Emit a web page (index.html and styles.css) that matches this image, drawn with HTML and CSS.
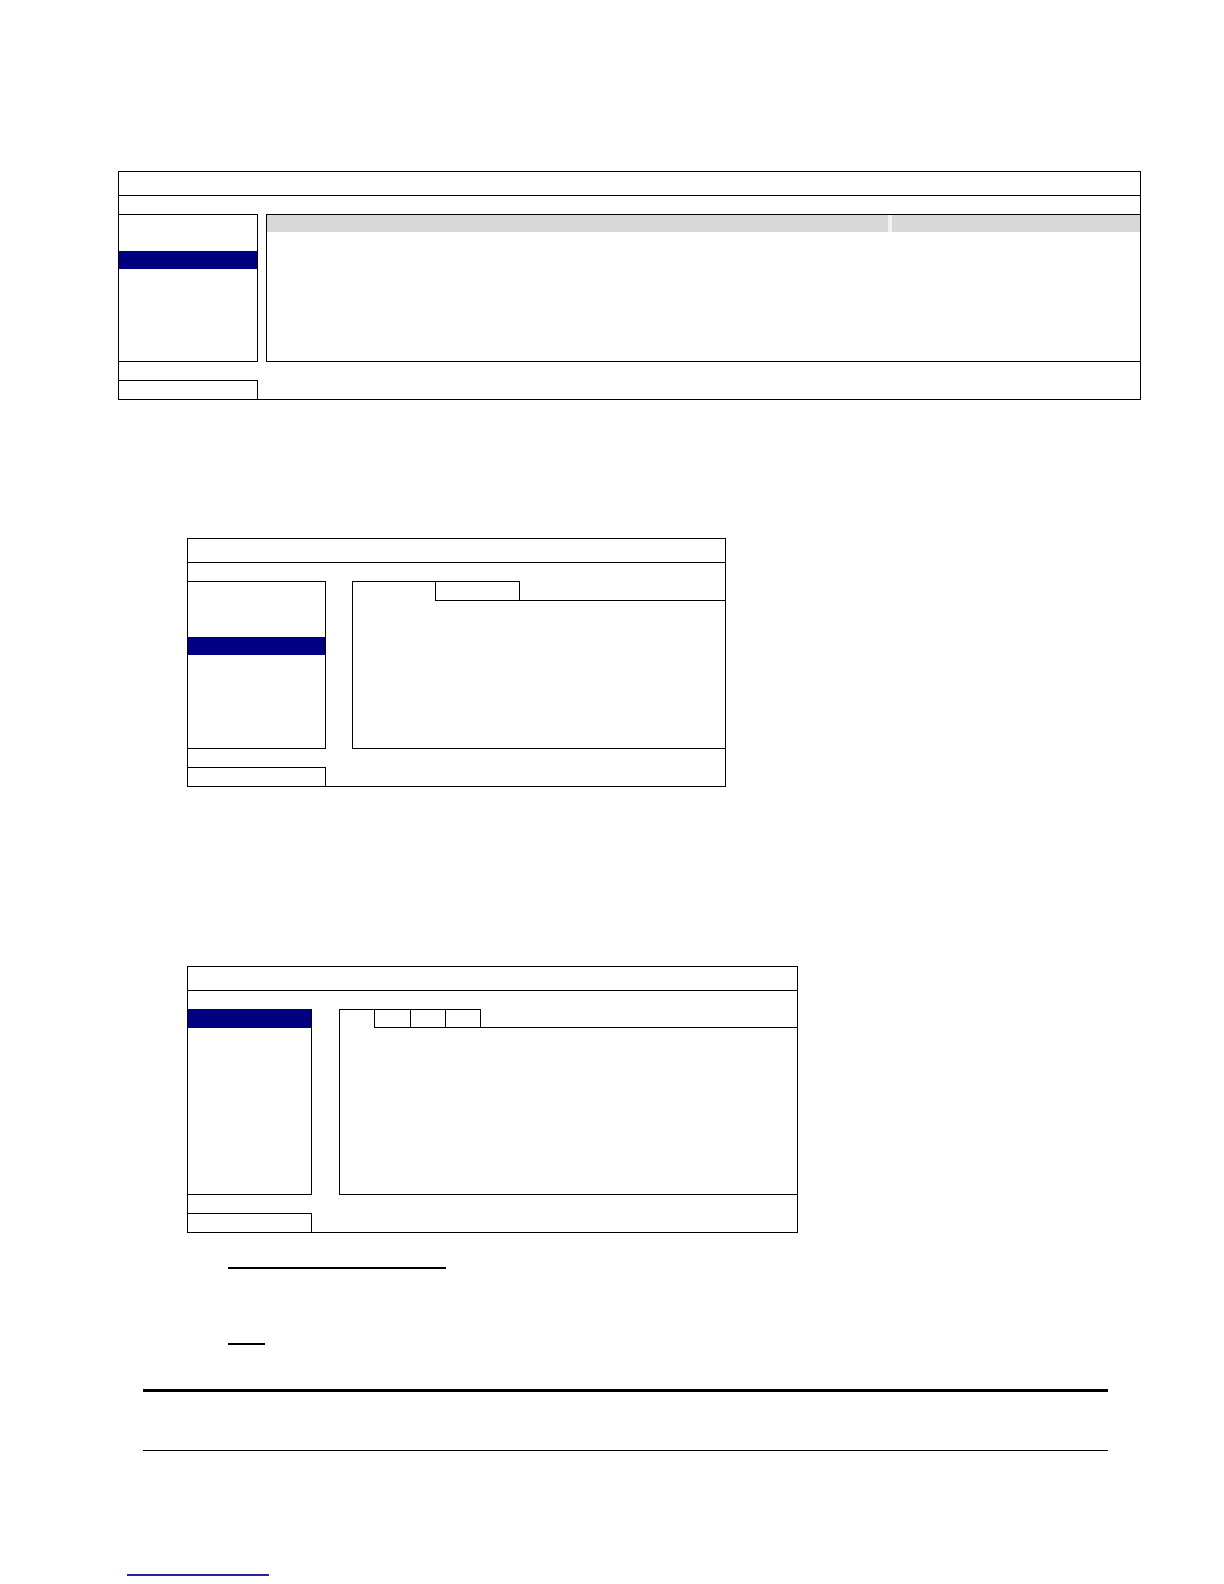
FILE: index.html
```html
<!DOCTYPE html>
<html lang="en">
<head>
<meta charset="utf-8">
<title>Menu screens</title>
<link rel="stylesheet" href="styles.css">
</head>
<body>
<main class="page">

  <section class="win win--a">
    <div class="win-title"></div>
    <div class="win-body">
      <div class="menu">
        <div class="menu-item"></div>
        <div class="menu-item"></div>
        <div class="menu-item is-active"></div>
      </div>
      <div class="content">
        <div class="grid-head">
          <div class="head-cell"></div>
          <div class="head-cell"></div>
        </div>
      </div>
    </div>
    <div class="win-foot"><div class="foot-box"></div></div>
  </section>

  <section class="win win--b">
    <div class="win-title"></div>
    <div class="win-body">
      <div class="menu">
        <div class="menu-item"></div>
        <div class="menu-item"></div>
        <div class="menu-item"></div>
        <div class="menu-item is-active"></div>
      </div>
      <div class="content">
        <div class="tabs">
          <div class="tab-lead"></div>
          <div class="tab tab--wide tab--last"></div>
          <div class="tab-fill"></div>
        </div>
      </div>
    </div>
    <div class="win-foot"><div class="foot-box"></div></div>
  </section>

  <section class="win win--c">
    <div class="win-title"></div>
    <div class="win-body">
      <div class="menu">
        <div class="menu-item is-active"></div>
      </div>
      <div class="content">
        <div class="tabs">
          <div class="tab-lead"></div>
          <div class="tab tab--s1"></div>
          <div class="tab tab--s2"></div>
          <div class="tab tab--s1 tab--last"></div>
          <div class="tab-fill"></div>
        </div>
      </div>
    </div>
    <div class="win-foot"><div class="foot-box"></div></div>
  </section>

  <div class="link-line link-line--long"></div>
  <div class="link-line link-line--short"></div>
  <div class="rule rule--thick"></div>
  <div class="rule rule--thin"></div>
  <div class="blue-line"></div>

</main>
</body>
</html>
```

FILE: styles.css
```css
html, body {
  margin: 0;
  padding: 0;
  background: #ffffff;
}

body {
  font-family: "Liberation Sans", Arial, sans-serif;
  width: 1224px;
  min-height: 1584px;
}

.page {
  padding-top: 171px;
}

/* ---------- window template ---------- */
.win {
  box-sizing: border-box;
  border: 1px solid #000;
}

.win--a {
  margin-left: 118px;
  width: 1023px;
  --menu-w: 139px;
  --panel-h: 148px;
  --gap: 8px;
}

.win--b {
  margin-left: 187px;
  margin-top: 138px;
  width: 539px;
  --menu-w: 138px;
  --panel-h: 168px;
  --gap: 26px;
  --tab-h: 20px;
  --lead-w: 82px;
}

.win--c {
  margin-left: 187px;
  margin-top: 179px;
  width: 611px;
  --menu-w: 124px;
  --panel-h: 186px;
  --gap: 27px;
  --tab-h: 19px;
  --lead-w: 34px;
}

.win-title {
  box-sizing: border-box;
  height: 24px;
  border-bottom: 1px solid #000;
}

.win-body {
  display: flex;
  padding-top: 18px;
}

.menu {
  box-sizing: border-box;
  width: var(--menu-w);
  height: var(--panel-h);
  border: 1px solid #000;
  border-left: 0;
  flex: none;
}

.win--b .menu {
  padding-top: 1px;
}

.win--c .menu {
  border-top-color: #000080;
}

.menu-item {
  height: 18px;
}

.menu-item.is-active {
  background: #000080;
}

.content {
  box-sizing: border-box;
  flex: 1;
  height: var(--panel-h);
  margin-left: var(--gap);
  border-left: 1px solid #000;
  border-bottom: 1px solid #000;
  display: flex;
  flex-direction: column;
}

.win--a .content {
  border-top: 1px solid #000;
}

/* ---------- list header (window A) ---------- */
.grid-head {
  display: grid;
  grid-template-columns: 621px 1fr;
  column-gap: 4px;
  height: 17px;
  background: #f2f2f2;
}

.head-cell {
  background: #d8d8d8;
}

/* ---------- tabs (windows B, C) ---------- */
.tabs {
  display: flex;
  height: var(--tab-h);
}

.tab-lead {
  box-sizing: border-box;
  width: var(--lead-w);
  height: var(--tab-h);
  border-top: 1px solid #000;
  flex: none;
}

.tab {
  box-sizing: border-box;
  height: var(--tab-h);
  border: 1px solid #000;
  border-right: 0;
  flex: none;
}

.tab--last {
  border-right: 1px solid #000;
}

.tab--wide { width: 85px; }
.tab--s1 { width: 36px; }
.tab--s2 { width: 35px; }

.tab-fill {
  flex: 1;
  border-bottom: 1px solid #000;
}

/* ---------- footer ---------- */
.win-foot {
  box-sizing: border-box;
  height: 37px;
  padding-top: 18px;
}

.foot-box {
  box-sizing: border-box;
  width: var(--menu-w);
  height: 19px;
  border-top: 1px solid #000;
  border-right: 1px solid #000;
}

/* ---------- lines below ---------- */
.link-line {
  margin-left: 228px;
  height: 2px;
  background: #000;
}

.link-line--long {
  width: 218px;
  margin-top: 34px;
}

.link-line--short {
  width: 37px;
  margin-top: 74px;
}

.rule {
  margin-left: 143px;
  width: 965px;
  background: #000;
}

.rule--thick {
  margin-top: 44px;
  height: 3px;
}

.rule--thin {
  margin-top: 58px;
  height: 1px;
}

.blue-line {
  margin-top: 123px;
  margin-left: 127px;
  width: 142px;
  height: 2px;
  background: #24249c;
}
```
